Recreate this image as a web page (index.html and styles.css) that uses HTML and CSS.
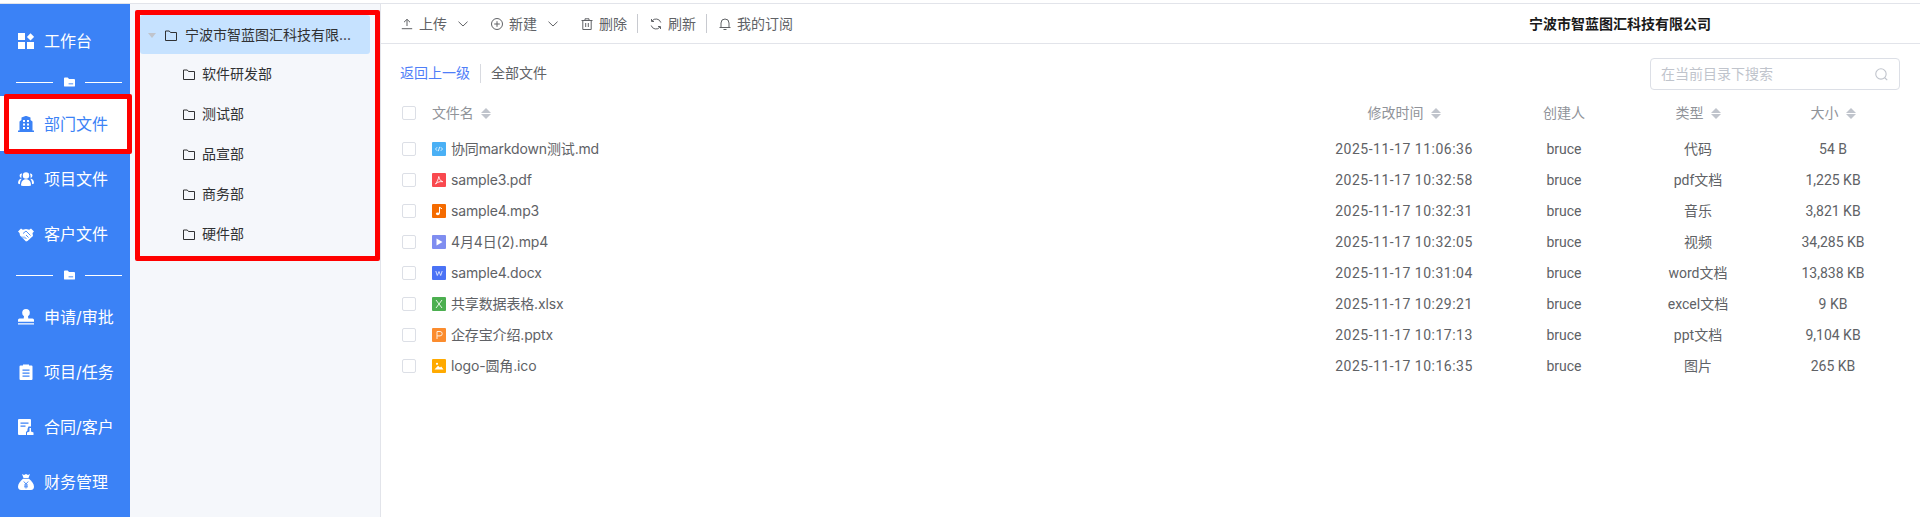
FILE: index.html
```html
<!DOCTYPE html>
<html lang="zh-CN">
  <head>
    <meta charset="UTF-8" />
    <title>部门文件</title>
    <link rel="stylesheet" href="styles.css">
  </head>
  <body>
    <div class="app">
      <nav class="sidebar">
        <a class="nav-item">
          <svg class="nav-icon" viewBox="0 0 16 16"><path d="M0 0h7v7H0zM0 9h7v7H0zM9 9h7v7H9z"/><path d="M12.500 0.300l3.600 3.600-3.600 3.600-3.600-3.600z"/></svg>
          工作台
        </a>
        <div class="nav-divider">
          <svg viewBox="0 0 12 10"><path d="M0 1a1 1 0 0 1 1-1h3l1.500 1.800H11a1 1 0 0 1 1 1V9a1 1 0 0 1-1 1H1a1 1 0 0 1-1-1z"/><path d="M5 7h5" stroke="#3b82f6" stroke-width="1"/></svg>
        </div>
        <a class="nav-item active">
          <svg class="nav-icon" viewBox="0 0 16 16"><path d="M0 14.500h1.500V5.500L3.500 4V1.500L7.500 0h1L12.500 1.500V4l2 1.500v9H16V16H0z"/><path d="M5 4h2v2H5zM9 4h2v2H9zM5 7.500h2v2H5zM9 7.500h2v2H9zM5 11h2v2H5zM9 11h2v2H9z" fill="#fff"/></svg>
          部门文件
        </a>
        <a class="nav-item">
          <svg class="nav-icon" viewBox="0 0 16 16"><circle cx="8" cy="4.500" r="3.200"/><path d="M3 14.500c0-4 1.800-6.300 5-6.300s5 2.300 5 6.300c-1.500.8-8.500.8-10 0z"/><path d="M3.300 2.500a2.300 2.300 0 0 0 .2 4.500c-.3-.8-.1-3 .7-4.200zM12.700 2.500a2.300 2.300 0 0 1-.2 4.500c.3-.8.100-3-.7-4.200zM3 7.800C1 8.300 0 10 0 12.500l2 .8c0-2 .3-4 1.800-5.500zM13 7.800c2 .5 3 2.200 3 4.700l-2 .8c0-2-.3-4-1.800-5.500z"/></svg>
          项目文件
        </a>
        <a class="nav-item">
          <svg class="nav-icon" viewBox="0 0 16 16"><path d="M0 5.500L3 2.500l1.800 1.300L8 3l3.200.8L13 2.500l3 3-1.500 1.500.5 3-5.500 5-1.500.5L2 9.500 1.500 7z"/><path d="M5 7.500L8 5l4.500 4.500M6 12.500L4 10.500M8.500 13L6 10.500M10.500 11.500L8 9" stroke="#3b82f6" stroke-width=".9" fill="none"/></svg>
          客户文件
        </a>
        <div class="nav-divider">
          <svg viewBox="0 0 12 10"><path d="M0 1a1 1 0 0 1 1-1h3l1.500 1.800H11a1 1 0 0 1 1 1V9a1 1 0 0 1-1 1H1a1 1 0 0 1-1-1z"/><path d="M5 7h5" stroke="#3b82f6" stroke-width="1"/></svg>
        </div>
        <a class="nav-item">
          <svg class="nav-icon" viewBox="0 0 16 16"><circle cx="8" cy="3.800" r="3.800"/><path d="M6 7h4l.3 2.500h4.200a1.500 1.500 0 0 1 1.500 1.500v1.700H0V11a1.500 1.500 0 0 1 1.500-1.500h4.200zM0 14.200h16v1.300H0z"/></svg>
          申请/审批
        </a>
        <a class="nav-item">
          <svg class="nav-icon" viewBox="0 0 16 16"><path fill-rule="evenodd" d="M2.500 1.500h2.500V.5h6v1h2.500a1 1 0 0 1 1 1V15a1 1 0 0 1-1 1h-11a1 1 0 0 1-1-1V2.500a1 1 0 0 1 1-1zM4.500 5.500v1.300h7V5.500zM4.500 8.500v1.300h7V8.500zM4.500 11.500v1.300h7v-1.300z"/></svg>
          项目/任务
        </a>
        <a class="nav-item">
          <svg class="nav-icon" viewBox="0 0 16 16"><path fill-rule="evenodd" d="M1 0h11a1 1 0 0 1 1 1v6.500h-2.500L9.500 10v1.500L8 13v3H1a1 1 0 0 1-1-1V1a1 1 0 0 1 1-1zM2.500 3.500v1.300h8V3.500zM2.500 6.500v1.300h5V6.500z"/><path d="M11.500 9h1.500v3.500l2.500 1V16h-6.500v-2.500l2.500-1z"/></svg>
          合同/客户
        </a>
        <a class="nav-item">
          <svg class="nav-icon" viewBox="0 0 16 16"><path d="M4 0l2 1 2-1 2 1 2-1-1.500 4h-5z"/><path fill-rule="evenodd" d="M5 4.800h6c2.500 2 5 5 5 8 0 2-1 3.200-3 3.200H3c-2 0-3-1.200-3-3.200 0-3 2.500-6 5-8z"/><path d="M5.800 7.500L8 10l2.200-2.500M8 10v4.500M6 11h4M6 12.800h4" stroke="#3b82f6" stroke-width=".9" fill="none"/></svg>
          财务管理
        </a>
      </nav>

      <aside class="tree">
        <div class="tree-row root">
          <span class="caret"></span>
          <svg class="folder" viewBox="0 0 12 11"><path d="M.5 1h3.800l1.200 1.500h6v8H.5z"/></svg>
          <span class="tree-label">宁波市智蓝图汇科技有限...</span>
        </div>
        <div class="tree-row child"><svg class="folder" viewBox="0 0 12 11"><path d="M.5 1h3.800l1.200 1.500h6v8H.5z"/></svg><span class="tree-label">软件研发部</span></div>
        <div class="tree-row child"><svg class="folder" viewBox="0 0 12 11"><path d="M.5 1h3.800l1.200 1.500h6v8H.5z"/></svg><span class="tree-label">测试部</span></div>
        <div class="tree-row child"><svg class="folder" viewBox="0 0 12 11"><path d="M.5 1h3.800l1.200 1.500h6v8H.5z"/></svg><span class="tree-label">品宣部</span></div>
        <div class="tree-row child"><svg class="folder" viewBox="0 0 12 11"><path d="M.5 1h3.800l1.200 1.500h6v8H.5z"/></svg><span class="tree-label">商务部</span></div>
        <div class="tree-row child"><svg class="folder" viewBox="0 0 12 11"><path d="M.5 1h3.800l1.200 1.500h6v8H.5z"/></svg><span class="tree-label">硬件部</span></div>
      </aside>

      <main class="main">
        <header class="toolbar">
          <span class="tool">
            <svg class="tool-icon" viewBox="0 0 12 12"><path d="M6 8V1.500M3 4.200L6 1.300l3 2.900M.8 10.700h10.400"/></svg>
            上传
            <svg class="chevron" viewBox="0 0 10 6"><path d="M.5.700L5 5l4.500-4.300"/></svg>
          </span>
          <span class="tool">
            <svg class="tool-icon" viewBox="0 0 12 12"><circle cx="6" cy="6" r="5.500"/><path d="M6 3.200v5.600M3.200 6h5.600"/></svg>
            新建
            <svg class="chevron" viewBox="0 0 10 6"><path d="M.5.700L5 5l4.500-4.300"/></svg>
          </span>
          <span class="tool">
            <svg class="tool-icon" viewBox="0 0 12 12"><path d="M.5 2.500h11M4 2.500V.8h4v1.700M1.800 2.500v9h8.400v-9M4.700 5v4M7.300 5v4"/></svg>
            删除
          </span>
          <span class="tool-sep"></span>
          <span class="tool">
            <svg class="tool-icon" viewBox="0 0 12 12"><path d="M10.800 4.500A5 5 0 0 0 2 3M1.200 7.500A5 5 0 0 0 10 9M1.500 1v2.500H4M10.500 11V8.500H8"/></svg>
            刷新
          </span>
          <span class="tool-sep"></span>
          <span class="tool">
            <svg class="tool-icon" viewBox="0 0 12 12"><path d="M.5 9.500h11M2 9.500V5a4 4 0 0 1 8 0v4.500M4.500 11.500h3"/></svg>
            我的订阅
          </span>
          <strong class="company">宁波市智蓝图汇科技有限公司</strong>
        </header>

        <div class="filebar">
          <div class="crumbs">
            <a class="crumb-back">返回上一级</a>
            <span class="crumb-sep"></span>
            <span>全部文件</span>
          </div>
          <div class="search">
            <span>在当前目录下搜索</span>
            <svg viewBox="0 0 12 12"><circle cx="5.500" cy="5.500" r="4.800"/><path d="M9 9l2.300 2.300"/></svg>
          </div>
        </div>

        <div class="table">
          <div class="file-row head">
            <span class="check"></span>
            <span class="name">文件名<i class="sort"></i></span>
            <span class="cell">修改时间<i class="sort"></i></span>
            <span class="cell">创建人</span>
            <span class="cell">类型<i class="sort"></i></span>
            <span class="cell">大小<i class="sort"></i></span>
          </div>
          <div class="file-row">
            <span class="check"></span>
            <span class="name"><svg class="file-icon" viewBox="0 0 14 14"><rect width="14" height="14" rx="1" fill="#4ab0f5"/><path d="M5.200 5.200L3.500 7l1.700 1.800M8.800 5.200L10.500 7 8.800 8.800M7.700 4.800L6.300 9.200" stroke="#fff" stroke-width=".8" fill="none"/></svg>协同markdown测试.md</span>
            <span class="cell date">2025-11-17 11:06:36</span><span class="cell">bruce</span><span class="cell">代码</span><span class="cell">54 B</span>
          </div>
          <div class="file-row">
            <span class="check"></span>
            <span class="name"><svg class="file-icon" viewBox="0 0 14 14"><rect width="14" height="14" rx="1" fill="#f9494f"/><path d="M6.800 3.500c.5 2.500 1.500 4.500 4 5.200-2.800-.4-5 .2-7.300 2.300 1.500-2 2.800-4.500 3.300-7.500z" stroke="#fff" stroke-width=".9" fill="none"/></svg>sample3.pdf</span>
            <span class="cell date">2025-11-17 10:32:58</span><span class="cell">bruce</span><span class="cell">pdf文档</span><span class="cell">1,225 KB</span>
          </div>
          <div class="file-row">
            <span class="check"></span>
            <span class="name"><svg class="file-icon" viewBox="0 0 14 14"><rect width="14" height="14" rx="1" fill="#f56b00"/><path d="M7.500 3v6.500" stroke="#fff" stroke-width="1"/><path d="M7.500 3.200l2.500 1.600" stroke="#fff" stroke-width="1"/><ellipse cx="5.800" cy="9.800" rx="1.900" ry="1.400" fill="#fff"/></svg>sample4.mp3</span>
            <span class="cell date">2025-11-17 10:32:31</span><span class="cell">bruce</span><span class="cell">音乐</span><span class="cell">3,821 KB</span>
          </div>
          <div class="file-row">
            <span class="check"></span>
            <span class="name"><svg class="file-icon" viewBox="0 0 14 14"><rect width="14" height="14" rx="1" fill="#7f8df0"/><path d="M4.500 3.500L10.500 7l-6 3.500z" fill="#fff"/></svg>4月4日(2).mp4</span>
            <span class="cell date">2025-11-17 10:32:05</span><span class="cell">bruce</span><span class="cell">视频</span><span class="cell">34,285 KB</span>
          </div>
          <div class="file-row">
            <span class="check"></span>
            <span class="name"><svg class="file-icon" viewBox="0 0 14 14"><rect width="14" height="14" rx="1" fill="#4a72f5"/><path d="M3.800 5l1.500 4.500L7 5.500l1.700 4L10.200 5" stroke="#dfe6ff" stroke-width=".9" fill="none"/></svg>sample4.docx</span>
            <span class="cell date">2025-11-17 10:31:04</span><span class="cell">bruce</span><span class="cell">word文档</span><span class="cell">13,838 KB</span>
          </div>
          <div class="file-row">
            <span class="check"></span>
            <span class="name"><svg class="file-icon" viewBox="0 0 14 14"><rect width="14" height="14" rx="1" fill="#4caf50"/><path d="M4 3l6 8M10 3l-6 8" stroke="#e6f5e6" stroke-width="1" fill="none"/></svg>共享数据表格.xlsx</span>
            <span class="cell date">2025-11-17 10:29:21</span><span class="cell">bruce</span><span class="cell">excel文档</span><span class="cell">9 KB</span>
          </div>
          <div class="file-row">
            <span class="check"></span>
            <span class="name"><svg class="file-icon" viewBox="0 0 14 14"><rect width="14" height="14" rx="1" fill="#fb8c2e"/><path d="M5 11V3.500h3a2.200 2.200 0 0 1 0 4.400H5" stroke="#ffeedd" stroke-width="1" fill="none"/></svg>企存宝介绍.pptx</span>
            <span class="cell date">2025-11-17 10:17:13</span><span class="cell">bruce</span><span class="cell">ppt文档</span><span class="cell">9,104 KB</span>
          </div>
          <div class="file-row">
            <span class="check"></span>
            <span class="name"><svg class="file-icon" viewBox="0 0 14 14"><rect width="14" height="14" rx="1" fill="#ffaa00"/><path d="M2.500 10.500L6 6.800l2 1.700 1.200-1 2.300 3z" fill="#fff"/><circle cx="5" cy="4.800" r="1.100" fill="#fff"/></svg>logo-圆角.ico</span>
            <span class="cell date">2025-11-17 10:16:35</span><span class="cell">bruce</span><span class="cell">图片</span><span class="cell">265 KB</span>
          </div>
        </div>
      </main>
    </div>

    <!-- red annotation frames drawn over the screenshot -->
    <div class="mark mark-nav"></div>
    <div class="mark mark-tree"></div>
  </body>
</html>
```

FILE: styles.css
```css
html,
body {
  margin: 0;
  height: 517px;
  overflow: hidden;
  background-color: #ffffff;
}
body {
  font-family: Inter, "Noto Sans CJK SC", sans-serif;
  font-size: 14px;
  line-height: 20px;
  color: #606266;
}
.app {
  display: flex;
  height: 513px;
  margin-top: 3px;
  border-top: 1px solid #e2e4ea;
}

/* Sidebar */
.sidebar {
  width: 130px;
  flex-shrink: 0;
  background-color: #3b82f6;
  padding-top: 9px;
  box-sizing: border-box;
}
.nav-item {
  display: flex;
  align-items: center;
  gap: 10px;
  height: 55px;
  padding-left: 18px;
  font-size: 16px;
  color: #ffffff;
}
.nav-item.active {
  background-color: #ffffff;
  color: #3b82f6;
}
.nav-icon {
  width: 16px;
  height: 16px;
  flex-shrink: 0;
  fill: #ffffff;
}
.nav-item.active .nav-icon {
  fill: #3b82f6;
}
.nav-divider {
  display: flex;
  align-items: center;
  justify-content: space-between;
  height: 28px;
  margin: 0 8px 0 16px;
}
.nav-divider::before,
.nav-divider::after {
  content: "";
  width: 37px;
  height: 1px;
  background-color: #ffffff;
}
.nav-divider svg {
  width: 11px;
  height: 10px;
  fill: #ffffff;
}

/* Department tree */
.tree {
  width: 251px;
  flex-shrink: 0;
  box-sizing: border-box;
  padding: 10px 10px 0;
  background-color: #f5f7fb;
  border-right: 1px solid #e2e4ea;
}
.tree-row {
  display: flex;
  align-items: center;
  height: 40px;
  color: #303133;
}
.tree-row.root {
  height: 39px;
  padding: 1px 8px 0 8px;
  box-sizing: border-box;
  background-color: #c6e2ff;
  border-radius: 3px;
  margin-top: 1px;
}
.tree-row.child {
  padding-left: 43px;
}
.caret {
  width: 0;
  height: 0;
  flex-shrink: 0;
  margin-right: 9px;
  border-left: 4px solid transparent;
  border-right: 4px solid transparent;
  border-top: 5px solid #c0c4cc;
}
.folder {
  width: 12px;
  height: 11px;
  flex-shrink: 0;
  margin-right: 8px;
  fill: none;
  stroke: #303133;
  stroke-width: 1;
}
.tree-label {
  white-space: nowrap;
}
.tree-row.child .tree-label {
  margin-left: -1px;
}

/* Main area */
.main {
  flex: 1;
  min-width: 0;
}
.toolbar {
  display: flex;
  align-items: center;
  height: 39px;
  padding-left: 20px;
  border-bottom: 1px solid #e2e4ea;
}
.tool {
  display: flex;
  align-items: center;
  gap: 6px;
  margin-right: 10px;
}
.tool-icon {
  width: 12px;
  height: 12px;
  fill: none;
  stroke: #606266;
  stroke-width: 1;
}
.chevron {
  width: 10px;
  height: 6px;
  margin: 0 13px 0 5px;
  fill: none;
  stroke: #606266;
  stroke-width: 1;
}
.tool-sep {
  width: 1px;
  height: 19px;
  margin-right: 12px;
  background-color: #c8cad0;
}
.company {
  margin-left: auto;
  margin-right: 209px;
  color: #1a1a1a;
  font-weight: 700;
}
.filebar {
  display: flex;
  align-items: center;
  justify-content: space-between;
  height: 32px;
  padding: 14px 20px 0 19px;
}
.crumbs {
  display: flex;
  align-items: center;
  padding-bottom: 2px;
}
.crumb-back {
  color: #4f7ef8;
}
.crumb-sep {
  width: 1px;
  height: 19px;
  margin: 0 10px;
  background-color: #d8dae0;
}
.search {
  display: flex;
  align-items: center;
  justify-content: space-between;
  width: 250px;
  height: 32px;
  box-sizing: border-box;
  padding: 0 11px 0 10px;
  border: 1px solid #dcdfe6;
  border-radius: 4px;
  color: #c0c4cc;
}
.search svg {
  width: 13px;
  height: 13px;
  fill: none;
  stroke: #c0c4cc;
}

/* File table */
.table {
  padding-top: 7px;
}
.file-row {
  display: grid;
  grid-template-columns: 30px 1fr 188px 132px 136px 134px;
  align-items: center;
  height: 31px;
  padding: 0 20px 0 21px;
}
.file-row.head {
  height: 32px;
  margin-bottom: 4px;
  color: #909399;
}
.check {
  width: 12px;
  height: 12px;
  border: 1px solid #dcdfe6;
  border-radius: 2px;
}
.name {
  display: flex;
  align-items: center;
  white-space: nowrap;
  letter-spacing: -0.15px;
}
.cell {
  display: flex;
  align-items: center;
  justify-content: center;
  white-space: nowrap;
  font-family: Roboto, "Noto Sans CJK SC", sans-serif;
}
.cell.date {
  letter-spacing: 0.5px;
}
.file-icon {
  width: 14px;
  height: 14px;
  flex-shrink: 0;
  margin-right: 5px;
}
.sort {
  display: flex;
  flex-direction: column;
  gap: 1px;
  margin-left: 7px;
}
.sort::before,
.sort::after {
  content: "";
  width: 0;
  height: 0;
  border-left: 5px solid transparent;
  border-right: 5px solid transparent;
}
.sort::before {
  border-bottom: 5.5px solid #c0c4cc;
}
.sort::after {
  border-top: 5.5px solid #c0c4cc;
}

/* Annotation frames */
.mark {
  position: absolute;
  box-sizing: border-box;
  border: 5px solid #ff0000;
  border-radius: 2px;
}
.mark-nav {
  left: 4px;
  top: 94px;
  width: 128px;
  height: 60px;
}
.mark-tree {
  left: 135px;
  top: 10px;
  width: 245px;
  height: 251px;
}
```
